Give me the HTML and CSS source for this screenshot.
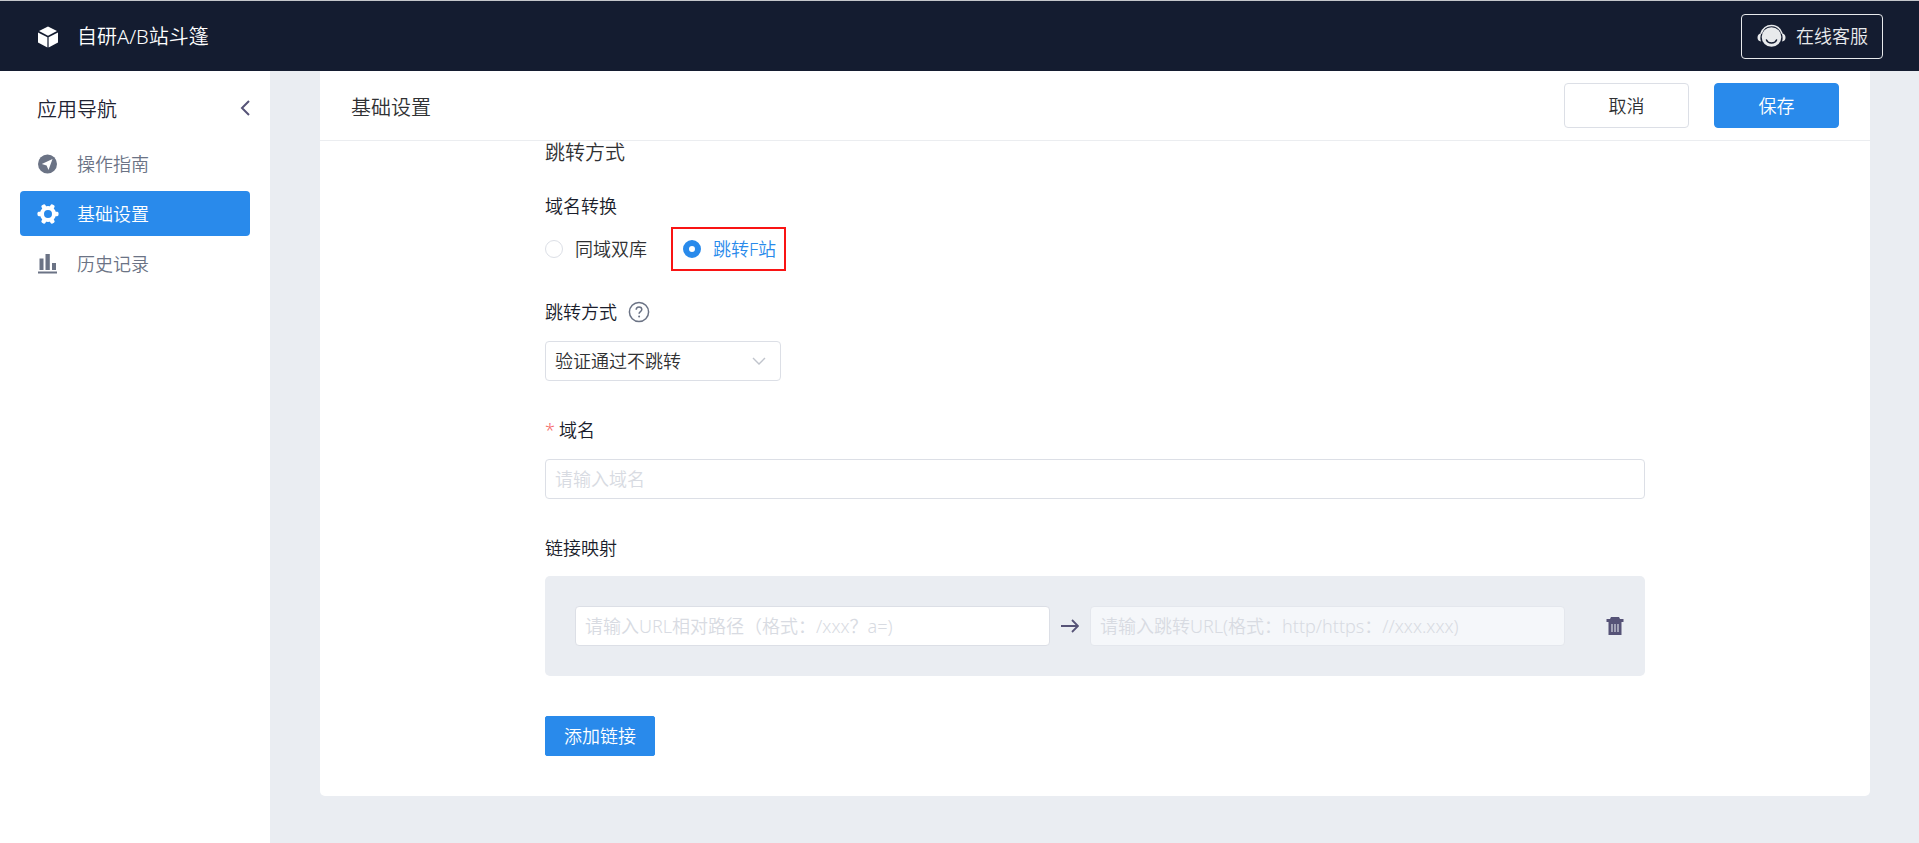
FILE: index.html
```html
<!DOCTYPE html>
<html lang="zh-CN">
<head>
<meta charset="utf-8">
<title>自研A/B站斗篷</title>
<link rel="stylesheet" href="styles.css">
</head>
<body>
<header class="topbar">
  <div class="brand">
    <svg class="brand-icon" viewBox="0 0 20 22" aria-hidden="true">
      <path d="M10 0.5 19 5 10 9.7 1 5Z" fill="#fff"/>
      <path d="M0 6.4 9.4 11.2V21.4L0 16.4Z" fill="#fff"/>
      <path d="M20 6.4 10.6 11.2V21.4L20 16.4Z" fill="#fff"/>
    </svg>
    <span>自研A/B站斗篷</span>
  </div>
  <button class="service" type="button">
    <svg class="service-icon" viewBox="0 0 29 24" aria-hidden="true">
      <circle cx="14.500" cy="13" r="9.800" fill="#e8eaec"/>
      <path d="M4 9.500C6 4 10 1.500 14.500 1.500S23 4 25 9.500" fill="none" stroke="#e8eaec" stroke-width="1.600"/>
      <path d="M4.500 9C1.500 9.500 .5 11.500 .5 13.500S1.500 17.300 4 17.500C3 14.500 3.200 12 4.500 9ZM24.500 9c3 .5 4 2.500 4 4.500s-1 3.800-3.500 4c1-3 .8-5.500-.5-8.500Z" fill="#e8eaec"/>
      <path d="M9.500 16C11 20 18 20 19.500 16" fill="none" stroke="#141c30" stroke-width="1.500" stroke-linecap="round"/>
    </svg>
    <span>在线客服</span>
  </button>
</header>
<div class="body">
  <nav class="sidebar" aria-label="应用导航">
    <div class="sidebar-head">
      <h2 class="sidebar-title">应用导航</h2>
      <button class="collapse" type="button" aria-label="收起">
        <svg viewBox="0 0 10 16" width="10" height="16"><path d="M9 1 2 8l7 7" fill="none" stroke="#565377" stroke-width="2"/></svg>
      </button>
    </div>
    <a class="nav-item" href="#guide">
      <svg class="nav-icon" viewBox="0 0 20 20"><circle cx="9.500" cy="10" r="9.500" fill="#6b7385"/><path d="M14.500 5 10.500 16 8.600 11.400 3.800 10Z" fill="#fff"/></svg>
      <span>操作指南</span>
    </a>
    <a class="nav-item active" href="#settings" aria-current="page">
      <svg class="nav-icon" viewBox="0 0 20 20"><circle cx="10" cy="10" r="6" fill="none" stroke="#fff" stroke-width="4"/><g fill="#fff"><rect id="tooth" x="7.800" y="-.5" width="4.400" height="4" rx="1.400" transform="rotate(30 10 10)"/><use href="#tooth" transform="rotate(60 10 10)"/><use href="#tooth" transform="rotate(120 10 10)"/><use href="#tooth" transform="rotate(180 10 10)"/><use href="#tooth" transform="rotate(240 10 10)"/><use href="#tooth" transform="rotate(300 10 10)"/></g></svg>
      <span>基础设置</span>
    </a>
    <a class="nav-item" href="#history">
      <svg class="nav-icon" viewBox="0 0 20 20"><path d="M1.500 4.500h4V16h-4ZM7.500 0h4.300v16H7.500ZM14 9h4v7h-4ZM0 17.500h19v2H0Z" fill="#6b7385"/></svg>
      <span>历史记录</span>
    </a>
  </nav>
  <main class="main">
    <section class="card">
      <div class="card-head">
        <h1 class="card-title">基础设置</h1>
        <div class="actions">
          <button class="btn" type="button">取消</button>
          <button class="btn primary" type="submit" form="settings">保存</button>
        </div>
      </div>
      <form class="form" id="settings">
        <h2 class="form-title">跳转方式</h2>
        <fieldset class="radios">
          <legend class="label">域名转换</legend>
          <div class="radio-row">
            <label class="radio"><input type="radio" name="mode"><span>同域双库</span></label>
            <label class="radio marked"><input type="radio" name="mode" checked><span>跳转F站</span></label>
          </div>
        </fieldset>
        <div class="field">
          <div class="label">
            <label for="jump">跳转方式</label>
            <svg class="help" viewBox="0 0 22 22" role="img" aria-label="帮助"><circle cx="11" cy="11" r="9.600" fill="none" stroke="#6b7385" stroke-width="1.500"/><path d="M8.200 8.800C8.200 7 9.400 6 11 6s2.800 1 2.800 2.600c0 2-2.700 2.100-2.700 4.200" fill="none" stroke="#6b7385" stroke-width="1.500"/><circle cx="11.100" cy="15.400" r="1" fill="#6b7385"/></svg>
          </div>
          <div class="select">
            <select id="jump"><option>验证通过不跳转</option></select>
            <svg class="arrow-down" viewBox="0 0 14 8"><path d="M1 1l6 6 6-6" fill="none" stroke="#c0c4cc" stroke-width="1.400"/></svg>
          </div>
        </div>
        <div class="field">
          <label class="label" for="domain"><span class="star">*</span>域名</label>
          <input class="input" id="domain" type="text" placeholder="请输入域名">
        </div>
        <div class="field links">
          <div class="label" id="map-label">链接映射</div>
          <div class="mapping" role="group" aria-labelledby="map-label">
            <input class="input" type="text" aria-label="URL相对路径" placeholder="请输入URL相对路径（格式：/xxx？a=)">
            <svg class="arrow" viewBox="0 0 18 14"><path d="M0 7h16.500M11 1l6 6-6 6" fill="none" stroke="#565377" stroke-width="1.800"/></svg>
            <input class="input" type="text" aria-label="跳转URL" placeholder="请输入跳转URL(格式：http/https：//xxx.xxx)" disabled>
            <button class="trash" type="button" aria-label="删除">
              <svg viewBox="0 0 18 18" width="18" height="18"><path d="M5 0h8l1 2h3.500v3H.5V2H4Z" fill="#565377"/><path d="M2.500 5h13v13h-13Z" fill="#565377"/><path d="M6 7v8M9 7v8M12 7v8" stroke="#d5d8e2" stroke-width="1.200"/></svg>
            </button>
          </div>
        </div>
        <button class="btn primary add" type="button">添加链接</button>
      </form>
    </section>
  </main>
</div>
</body>
</html>
```

FILE: styles.css
```css
* {
  box-sizing: border-box;
}

body {
  margin: 0;
  min-height: 100vh;
  display: flex;
  flex-direction: column;
  background: #eaedf2;
  color: #303133;
  font: 18px/26px "Noto Sans", "Noto Sans CJK SC", sans-serif;
  font-weight: 350;
}

h1,
h2 {
  margin: 0;
  font-size: 20px;
  font-weight: inherit;
}

button,
input,
select {
  font: inherit;
  color: inherit;
}

.topbar {
  display: flex;
  align-items: center;
  justify-content: space-between;
  height: 71px;
  padding: 0 36px 0 38px;
  border-top: 1px solid #c4c6ca;
  background: #141c30;
  color: #fff;
}

.brand {
  display: flex;
  align-items: center;
  gap: 19px;
  padding-top: 2px;
  font-size: 20px;
}

.brand-icon {
  width: 20px;
  height: 22px;
}

.service {
  display: flex;
  align-items: center;
  gap: 10px;
  height: 45px;
  padding: 0 14px 0 15px;
  border: 1px solid #e8eaec;
  border-radius: 4px;
  background: none;
  color: #e8eaec;
}

.service-icon {
  width: 29px;
  height: 24px;
}

.body {
  flex: 1;
  display: flex;
}

.sidebar {
  flex: none;
  width: 270px;
  padding: 20px;
  background: #fff;
}

.sidebar-head {
  display: flex;
  align-items: center;
  justify-content: space-between;
  height: 34px;
  margin-bottom: 16px;
  padding-left: 17px;
  color: #1f2333;
}

.sidebar-title {
  padding-top: 4px;
}

.collapse,
.trash {
  display: flex;
  align-items: center;
  justify-content: center;
  padding: 0;
  border: 0;
  background: none;
}

.nav-item {
  display: flex;
  align-items: center;
  gap: 19px;
  height: 45px;
  margin-bottom: 5px;
  padding-left: 18px;
  border-radius: 4px;
  color: #6b7385;
  text-decoration: none;
}

.nav-item.active {
  background: #298aeb;
  color: #fff;
}

.nav-icon {
  width: 20px;
  height: 20px;
  overflow: visible;
}

.main {
  flex: 1;
  min-width: 0;
  padding: 0 49px 47px 50px;
}

.card {
  border-radius: 0 0 5px 5px;
  background: #fff;
}

.card-head {
  display: flex;
  align-items: center;
  justify-content: space-between;
  height: 70px;
  padding: 0 31px;
  border-bottom: 1px solid #ebedf0;
}

.card-title {
  padding-top: 4px;
}

.actions {
  display: flex;
  gap: 25px;
}

.btn {
  width: 125px;
  height: 45px;
  padding: 0;
  border: 1px solid #dcdfe6;
  border-radius: 4px;
  background: #fff;
}

.btn.primary {
  border-color: #298aeb;
  background: #298aeb;
  color: #fff;
}

.form {
  max-width: 1100px;
  margin: 0 auto;
  padding-bottom: 40px;
}

.form-title {
  line-height: 24px;
  margin-bottom: 28px;
}

.radios {
  margin: 0 0 28px;
  padding: 0;
  border: 0;
}

.label {
  display: flex;
  align-items: center;
  margin-bottom: 16px;
  padding: 0;
  color: #1a1d2b;
}

.radios .label {
  margin-bottom: 8px;
}

.radio-row {
  display: flex;
  gap: 24px;
}

.radio {
  display: flex;
  align-items: center;
  gap: 12px;
  height: 44px;
}

.radio input {
  appearance: none;
  width: 18px;
  height: 18px;
  margin: 0;
  border: 1px solid #dcdfe6;
  border-radius: 50%;
  background: #fff;
}

.radio input:checked {
  border: 6px solid #298aeb;
}

.marked {
  padding: 0 8px 0 10px;
  border: 2px solid #f91414;
  color: #298aeb;
}

.help {
  width: 22px;
  height: 22px;
  margin-left: 11px;
}

.field {
  margin-bottom: 36px;
}

.links {
  margin-bottom: 40px;
}

.links .label {
  margin-bottom: 15px;
}

.select {
  position: relative;
  width: 236px;
}

.select select,
.input {
  display: block;
  width: 100%;
  height: 40px;
  padding: 0 9px;
  border: 1px solid #dcdfe6;
  border-radius: 4px;
  background: #fff;
}

.select select {
  appearance: none;
}

.arrow-down {
  position: absolute;
  top: 16px;
  right: 15px;
  width: 14px;
  height: 8px;
  pointer-events: none;
}

.star {
  margin-right: 4px;
  color: #f56c6c;
}

.input::placeholder {
  color: #d8dbe2;
  opacity: 1;
}

.input:disabled {
  border-color: #e4e7ed;
  background: #f5f7fa;
}

.mapping {
  display: flex;
  align-items: center;
  padding: 30px 20px 30px 30px;
  border-radius: 5px;
  background: #eaedf2;
}

.mapping .input {
  flex: 1;
  width: auto;
  min-width: 0;
}

.arrow {
  width: 18px;
  height: 14px;
  margin: 0 11px;
}

.trash {
  width: 20px;
  height: 20px;
  margin-left: 40px;
}

.add {
  display: block;
  width: 110px;
  height: 40px;
  border-radius: 2px;
}
```
